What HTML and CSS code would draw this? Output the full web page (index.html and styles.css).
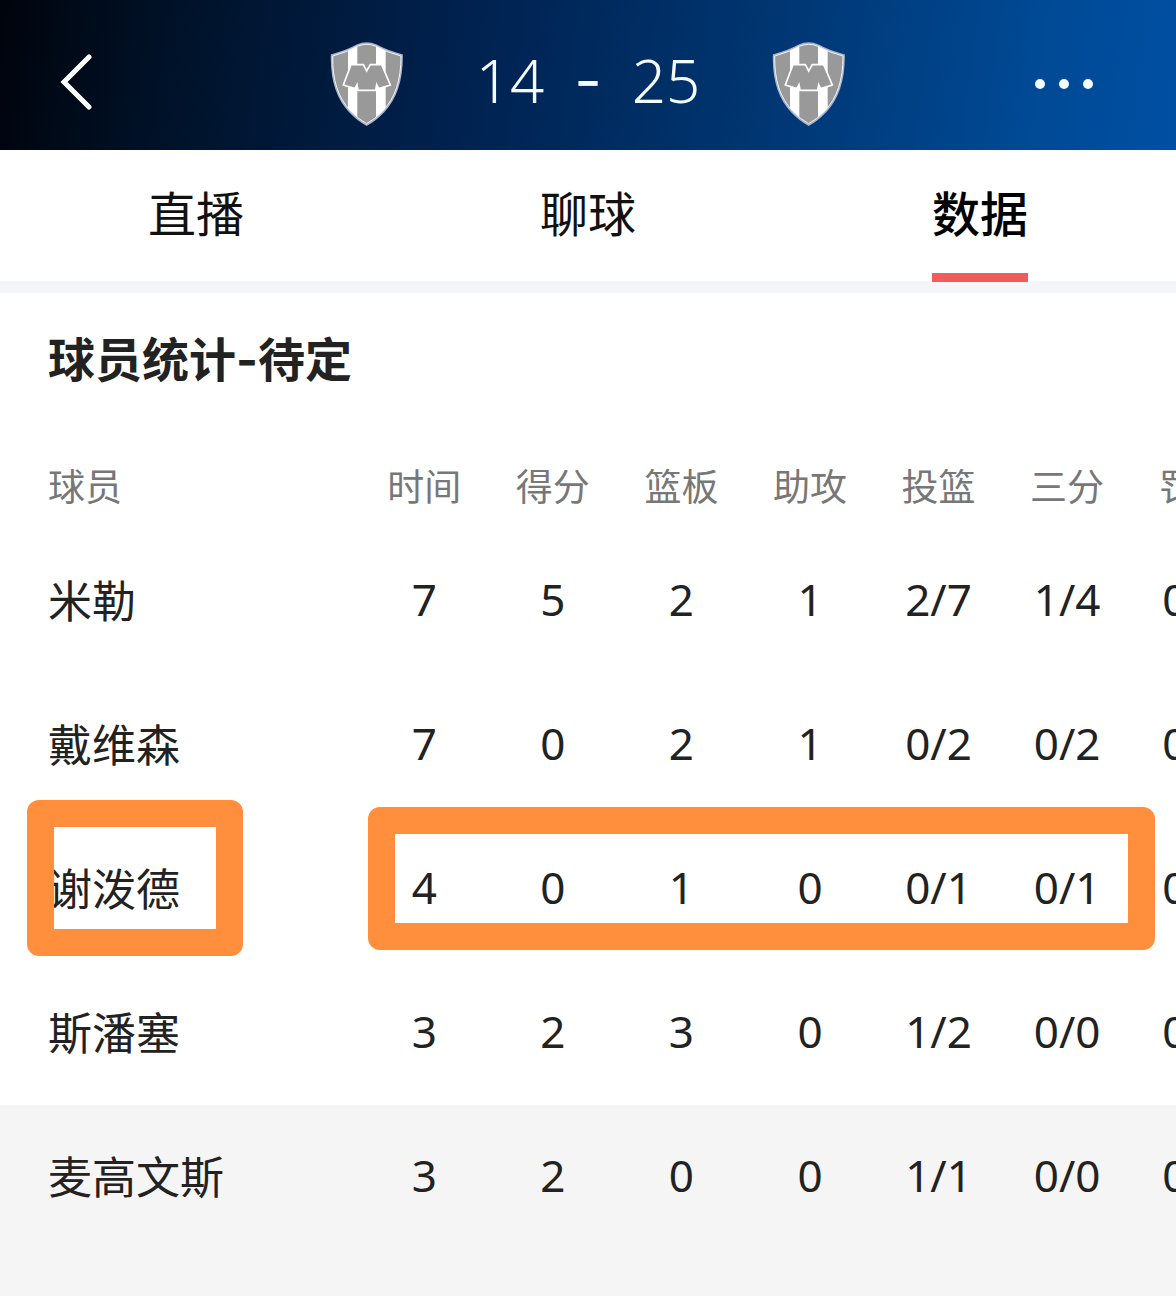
FILE: index.html
```
<!DOCTYPE html>
<html lang="zh-CN">
<head>
  <meta charset="UTF-8">
  <title>球员统计</title>
  <meta name="viewport" content="width=device-width, initial-scale=1">
  <link rel="stylesheet" href="styles.css">
</head>
<body>
  <!-- club badge, used for both teams -->
  <svg width="0" height="0" class="defs" aria-hidden="true">
    <symbol id="badge" viewBox="60 66 220 252">
      <clipPath id="shield">
        <path d="M64 105 Q110 93 140 76 Q169 63 198 76 Q228 93 275 105 C276 180 258 235 220 275 Q194 302 169 315 Q144 302 118 275 C80 235 62 180 64 105Z"/>
      </clipPath>
      <g clip-path="url(#shield)">
        <path fill="#999" d="M60 66h220v252H60z"/>
        <path fill="#fff" d="M113 66h28v252h-28zM197 66h29v252h-29z"/>
      </g>
      <path fill="none" stroke="#a9b3ca" stroke-width="5" d="M64 105 Q110 93 140 76 Q169 63 198 76 Q228 93 275 105 C276 180 258 235 220 275 Q194 302 169 315 Q144 302 118 275 C80 235 62 180 64 105Z"/>
      <path fill="none" stroke="#f4f5f8" stroke-width="3" d="M67 108 Q112 96 141 79 Q169 67 197 79 Q226 96 272 108 C272 180 255 233 217 273 Q192 299 169 311 Q146 299 121 273 C83 233 66 180 67 108Z"/>
      <path fill="#999" stroke="#fff" stroke-width="5" d="M122 134h37l10 19 11-19h34l26 61-35 11-6-12-3 17h-53l-3-17-6 12-35-11z"/>
    </symbol>
  </svg>

  <header class="topbar">
    <button class="icon-btn back" aria-label="返回">
      <svg width="32" height="60" viewBox="0 0 32 60"><path d="M29 3 4 28l25 25" fill="none" stroke="#fff" stroke-width="5" stroke-linecap="round"/></svg>
    </button>
    <div class="match">
      <svg class="badge"><use href="#badge"/></svg>
      <div class="score">
        <span>14</span><span class="dash">-</span><span>25</span>
      </div>
      <svg class="badge"><use href="#badge"/></svg>
    </div>
    <button class="icon-btn more" aria-label="更多">
      <svg width="60" height="12" viewBox="0 0 60 12" fill="#f0faff"><circle cx="6" cy="6" r="5"/><circle cx="30" cy="6" r="5"/><circle cx="54" cy="6" r="5"/></svg>
    </button>
  </header>

  <nav class="tabs">
    <a class="tab" href="#live">直播</a>
    <a class="tab" href="#chat">聊球</a>
    <a class="tab active" href="#stats">数据</a>
  </nav>

  <main class="stats" id="stats">
    <h1 class="stats-title">球员统计-待定</h1>
    <div class="table-scroll">
      <table class="stats-table">
        <thead>
          <tr><th class="player">球员</th><th>时间</th><th>得分</th><th>篮板</th><th>助攻</th><th>投篮</th><th>三分</th><th>罚球</th></tr>
        </thead>
        <tbody>
          <tr><td class="player">米勒</td><td>7</td><td>5</td><td>2</td><td>1</td><td>2/7</td><td>1/4</td><td>0/0</td></tr>
          <tr><td class="player">戴维森</td><td>7</td><td>0</td><td>2</td><td>1</td><td>0/2</td><td>0/2</td><td>0/0</td></tr>
          <tr>
            <td class="player">谢泼德<span class="mark mark-name"></span></td>
            <td>4<span class="mark mark-line"></span></td><td>0</td><td>1</td><td>0</td><td>0/1</td><td>0/1</td><td>0/0</td>
          </tr>
          <tr><td class="player">斯潘塞</td><td>3</td><td>2</td><td>3</td><td>0</td><td>1/2</td><td>0/0</td><td>0/0</td></tr>
          <tr class="bench"><td class="player">麦高文斯</td><td>3</td><td>2</td><td>0</td><td>0</td><td>1/1</td><td>0/0</td><td>0/0</td></tr>
        </tbody>
      </table>
    </div>
  </main>
</body>
</html>
```

FILE: styles.css
```
:root {
  --text: #222;
  --muted: #777;
  --accent: #f05b5b;
  --mark: #ff8f3c;
  --bench: #f5f5f5;
  --pad: 48px;
}
* {
  box-sizing: border-box;
}
body {
  margin: 0;
  min-height: 100vh;
  background: var(--bench);
  color: var(--text);
  font-family: "Noto Sans", "Noto Sans CJK SC", sans-serif;
  font-size: 44px;
  overflow-x: hidden;
}
.defs {
  position: absolute;
}

/* Score bar */
.topbar {
  display: grid;
  grid-template-columns: 1fr auto 1fr;
  align-items: center;
  height: 150px;
  padding: 18px 82px 0 60px;
  background: linear-gradient(98deg, #00040c 0%, #001229 15%, #002250 40%, #003672 65%, #004a96 88%, #004fa3 100%);
}
.icon-btn {
  padding: 0;
  border: 0;
  background: none;
  cursor: pointer;
}
.icon-btn svg {
  display: block;
}
.back {
  justify-self: start;
}
.more {
  justify-self: end;
}
.match {
  display: flex;
  align-items: center;
  gap: 72px;
  margin-left: 22px;
}
.badge {
  width: 74px;
  height: 84px;
}
.score {
  display: flex;
  gap: 30px;
  padding-bottom: 8px;
  color: #f5fcff;
  font-size: 60px;
  font-weight: 300;
  line-height: 76px;
}
.dash {
  font-family: Inter, sans-serif;
  font-weight: 400;
}

/* Tabs */
.tabs {
  display: grid;
  grid-template-columns: repeat(3, 1fr);
  justify-items: center;
  height: 143px;
  background: #fff;
  border-bottom: 12px solid #f4f5f8;
}
.tab {
  height: 132px;
  color: #111;
  font-size: 48px;
  line-height: 128px;
  text-decoration: none;
}
.tab.active {
  color: #000;
  font-weight: 500;
  border-bottom: 9px solid var(--accent);
}

/* Player stats */
.stats {
  background: #fff;
}
.stats-title {
  margin: 0;
  padding: 32px var(--pad) 46px;
  font-family: Inter, "Noto Sans CJK SC", sans-serif;
  font-size: 47px;
  font-weight: 700;
  line-height: 70px;
}
.table-scroll {
  overflow: hidden;
}
.stats-table {
  width: 100%;
  min-width: 1260px;
  border-collapse: collapse;
  table-layout: fixed;
}
.stats-table th,
.stats-table td {
  position: relative;
  padding: 0;
  text-align: center;
  font-weight: 400;
}
.stats-table th {
  height: 88px;
  color: var(--muted);
  font-size: 37px;
}
.stats-table td {
  height: 144px;
  padding-bottom: 4px;
}
.stats-table .player {
  width: 360px;
  padding-left: var(--pad);
  text-align: left;
}
.bench {
  background: var(--bench);
}

/* Highlight frames over a player's line */
.mark {
  position: absolute;
  z-index: 1;
  border: 27px solid var(--mark);
  border-radius: 12px;
}
.mark-name {
  top: -17px;
  left: 27px;
  width: 216px;
  height: 156px;
}
.mark-line {
  top: -10px;
  left: 8px;
  width: 787px;
  height: 143px;
}
```
